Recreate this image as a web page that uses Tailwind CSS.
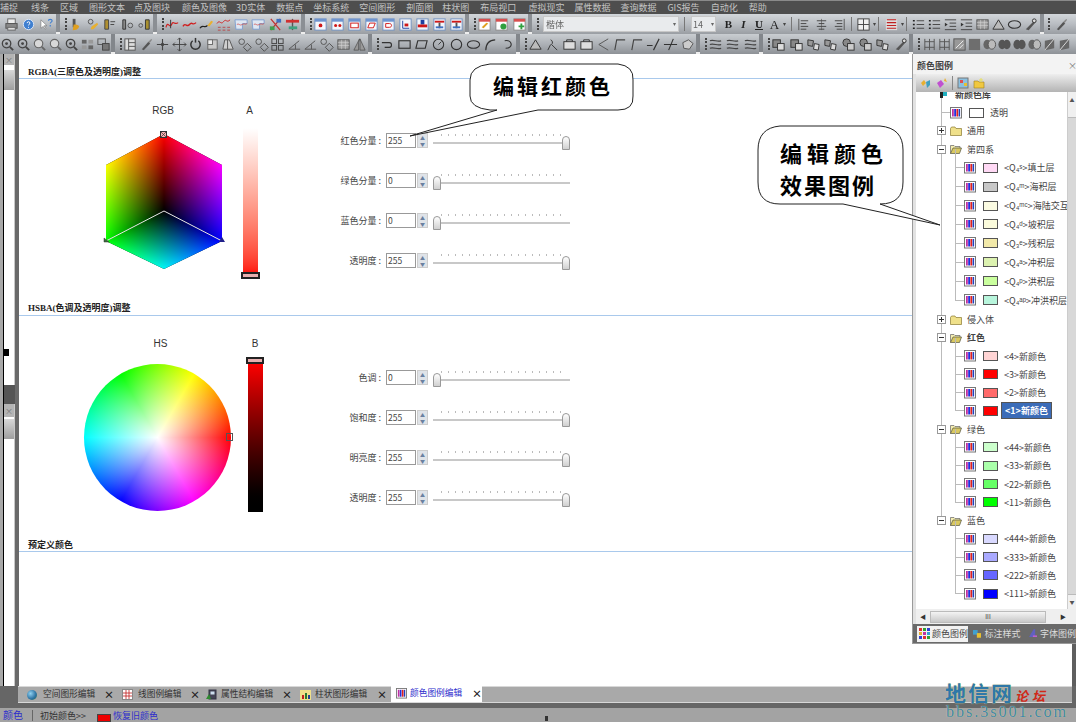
<!DOCTYPE html>
<html lang="zh">
<head>
<meta charset="utf-8">
<title>颜色图例编辑</title>
<script src="https://cdn.jsdelivr.net/npm/@tailwindcss/browser@4"></script>
</head>
<body class="bg-[#5a5a5a]">
<div class="relative w-[1076px] h-[722px] overflow-hidden flex flex-col font-['Noto_Sans_CJK_SC','Liberation_Sans',sans-serif] text-[9px] leading-none text-[#444]">

<svg class="absolute w-0 h-0">
  <defs>
    <symbol id="pr" viewBox="0 0 16 16"><rect x="4" y="2" width="8" height="5" fill="#eee" stroke="#666"/><rect x="2" y="7" width="12" height="5" fill="#888" stroke="#555"/><rect x="4" y="11" width="8" height="3" fill="#ddd" stroke="#666"/></symbol>
    <symbol id="hp" viewBox="0 0 16 16"><circle cx="8" cy="8" r="5.500" fill="#3f7fd0" stroke="#dfe8f5"/><path d="M6.500 6.500c0-2 3-2 3 0 0 1.200-1.500 1.200-1.500 2.500M8 10.500v1" stroke="#fff" fill="none"/></symbol>
    <symbol id="wh" viewBox="0 0 16 16"><path d="M2 3v9l2.500-2 2 3 1-.7-2-3h3z" fill="#fff" stroke="#777" stroke-width=".7"/><path d="M10 4c0-2 4-2 4 0 0 1.500-2 1.500-2 3M12 8.500v1.500" stroke="#3f7fd0" fill="none" stroke-width="1.200"/></symbol>
    <symbol id="ya" viewBox="0 0 16 16"><path d="M5 2h3v9H5z" fill="#555"/><path d="M6 8c2 0 5 0 6 2-1 3-4 4-7 4z" fill="#e0a020"/></symbol>
    <symbol id="yb" viewBox="0 0 16 16"><circle cx="6" cy="5" r="2.500" fill="none" stroke="#555"/><path d="M7 10l6-4 1 2-5 5-3 0z" fill="#e8b030"/></symbol>
    <symbol id="yc" viewBox="0 0 16 16"><path d="M3 3h4v10H3z" fill="#b09030" stroke="#444"/><path d="M9 5h5M9 8h4" stroke="#444"/></symbol>
    <symbol id="yd" viewBox="0 0 16 16"><path d="M3 3h3v10H3z" fill="#888" stroke="#333"/><circle cx="11" cy="9" r="2.500" fill="none" stroke="#555"/></symbol>
    <symbol id="ye" viewBox="0 0 16 16"><circle cx="4" cy="9" r="2" fill="none" stroke="#555"/><path d="M9 3h4v10H9z" fill="#a89030" stroke="#333"/></symbol>
    <symbol id="ca" viewBox="0 0 16 16"><path d="M1 11c2-8 4 2 6-3s3 1 7-2" fill="none" stroke="#d02020" stroke-width="1.300"/><path d="M6 3v9" stroke="#333"/></symbol>
    <symbol id="cb" viewBox="0 0 16 16"><path d="M1 10c3-5 4 2 7-2s3 2 7-2" fill="none" stroke="#d02020" stroke-width="1.500"/></symbol>
    <symbol id="cc" viewBox="0 0 16 16"><path d="M1 12c3-5 5 1 8-3" fill="none" stroke="#222" stroke-width="1.300"/><path d="M9 9l4-5 2 1-4 5z" fill="#e8b030"/></symbol>
    <symbol id="cd" viewBox="0 0 16 16"><path d="M1 7c3-5 4 2 7-2s3 2 7-2" fill="none" stroke="#d02020"/><path d="M2 11h3M2 14h3M7 11h3M7 14h3M12 11h3M12 14h3" stroke="#c03030" stroke-width=".8"/></symbol>
    <symbol id="ce" viewBox="0 0 16 16"><path d="M1 3h13v4H9v6H2z" fill="#dfe7f2" stroke="#7f9fd0"/><path d="M3 8c2-2 3 2 6 0s2 1 5-1" fill="none" stroke="#d05050" stroke-width=".8"/></symbol>
    <symbol id="cf" viewBox="0 0 16 16"><path d="M3 2l10 12M13 2L3 14" stroke="#c03030" stroke-width="1.300"/><rect x="2" y="10" width="5" height="4" fill="#3fa050"/><rect x="9" y="2" width="5" height="4" fill="#3f70c0"/></symbol>
    <symbol id="cg" viewBox="0 0 16 16"><path d="M8 2v12" stroke="#555" stroke-width="1.500"/><rect x="1" y="3" width="14" height="3" fill="#d03030"/><rect x="4" y="10" width="9" height="3" fill="#3fa080"/></symbol>
    <symbol id="wa" viewBox="0 0 16 16"><rect x="2" y="2" width="12" height="12" fill="#f4f6fb" stroke="#7090c0"/><rect x="2" y="2" width="12" height="3" fill="#6f95d0"/><circle cx="8" cy="9" r="2" fill="#d01818"/></symbol>
    <symbol id="wb" viewBox="0 0 16 16"><rect x="2" y="2" width="12" height="12" fill="#f4f6fb" stroke="#7090c0"/><rect x="2" y="2" width="12" height="3" fill="#6f95d0"/><circle cx="6" cy="9" r="1.600" fill="#d01818"/><circle cx="10.500" cy="9" r="1.600" fill="#d01818"/></symbol>
    <symbol id="wc" viewBox="0 0 16 16"><rect x="2" y="2" width="12" height="12" fill="#f4f6fb" stroke="#7090c0"/><rect x="2" y="2" width="12" height="3" fill="#6f95d0"/><rect x="4" y="6.500" width="8" height="5" fill="#fff" stroke="#d01818"/></symbol>
    <symbol id="wd" viewBox="0 0 16 16"><rect x="2" y="2" width="12" height="12" fill="#f4f6fb" stroke="#7090c0"/><rect x="2" y="2" width="12" height="3" fill="#6f95d0"/><path d="M6 6.500h6l-2 5H4z" fill="#fff" stroke="#d01818"/></symbol>
    <symbol id="we" viewBox="0 0 16 16"><rect x="2" y="2" width="12" height="12" fill="#f4f6fb" stroke="#7090c0"/><rect x="2" y="2" width="12" height="3" fill="#6f95d0"/><path d="M5 7h4c3 0 3 4 0 4H5z" fill="#fff" stroke="#d01818"/></symbol>
    <symbol id="wf" viewBox="0 0 16 16"><rect x="2" y="2" width="12" height="12" fill="#f4f6fb" stroke="#7090c0"/><path d="M5 4v8h7" stroke="#2040a0" fill="none"/><rect x="7" y="7" width="4" height="3" fill="#d01818"/></symbol>
    <symbol id="wg" viewBox="0 0 16 16"><rect x="2" y="2" width="12" height="12" fill="#f4f6fb" stroke="#7090c0"/><rect x="6" y="3" width="4" height="5" fill="#2040a0"/><rect x="3" y="8" width="10" height="3" fill="#d01818"/></symbol>
    <symbol id="wh2" viewBox="0 0 16 16"><rect x="2" y="2" width="12" height="12" fill="#f4f6fb" stroke="#7090c0"/><rect x="3" y="4" width="10" height="2" fill="#d01818"/><rect x="7" y="6" width="2" height="6" fill="#555"/><rect x="4" y="10" width="8" height="2" fill="#3f70c0"/></symbol>
    <symbol id="ta" viewBox="0 0 16 16"><rect x="2" y="2" width="12" height="12" fill="#fff" stroke="#8a8a8a"/><rect x="2" y="2" width="12" height="3" fill="#d85050"/><path d="M5 11l5-5 2 1-5 5z" fill="#e0a020"/></symbol>
    <symbol id="tb" viewBox="0 0 16 16"><rect x="2" y="2" width="12" height="12" fill="#fff" stroke="#8a8a8a"/><rect x="2" y="2" width="12" height="3" fill="#d85050"/><circle cx="10" cy="10" r="3.200" fill="#30a040"/></symbol>
    <symbol id="tc" viewBox="0 0 16 16"><rect x="2" y="2" width="12" height="12" fill="#fff" stroke="#8a8a8a"/><rect x="2" y="2" width="12" height="3" fill="#d85050"/><path d="M10 7v6M7 10h6" stroke="#30a040" stroke-width="2"/></symbol>
    <symbol id="za" viewBox="0 0 16 16"><circle cx="7" cy="7" r="4.500" fill="none" stroke="#444" stroke-width="1.400"/><path d="M10.500 10.500L14 14" stroke="#444" stroke-width="2"/><circle cx="7" cy="7" r="1.500" fill="#444"/></symbol>
    <symbol id="zb" viewBox="0 0 16 16"><circle cx="7" cy="7" r="4.500" fill="#d8d8d8" stroke="#666" stroke-width="1.200"/><path d="M10.500 10.500L14 14" stroke="#666" stroke-width="2"/></symbol>
    <symbol id="zc" viewBox="0 0 16 16"><rect x="2" y="3" width="5" height="4" fill="#666"/><rect x="9" y="3" width="5" height="4" fill="#999"/><rect x="2" y="9" width="5" height="4" fill="#999"/><rect x="9" y="9" width="5" height="4" fill="#666"/></symbol>
    <symbol id="zd" viewBox="0 0 16 16"><rect x="2" y="2" width="8" height="6" fill="none" stroke="#555"/><rect x="7" y="7" width="7" height="7" fill="#777" stroke="#444"/></symbol>
    <symbol id="ma" viewBox="0 0 16 16"><path d="M8 2v12M2 8h12" stroke="#444" stroke-width="1.200"/><circle cx="8" cy="8" r="1.800" fill="#444"/></symbol>
    <symbol id="mb" viewBox="0 0 16 16"><path d="M8 1v14M1 8h14M8 1l-2 2M8 1l2 2M8 15l-2-2M8 15l2-2M1 8l2-2M1 8l2 2M15 8l-2-2M15 8l-2 2" stroke="#444" fill="none"/></symbol>
    <symbol id="mc" viewBox="0 0 16 16"><path d="M5 4a5 5 0 1 0 6 0" fill="none" stroke="#333" stroke-width="1.600"/><path d="M8 1v5" stroke="#333" stroke-width="1.600"/></symbol>
    <symbol id="md" viewBox="0 0 16 16"><rect x="3" y="3" width="10" height="10" fill="#c8c8c8" stroke="#666"/><rect x="3" y="3" width="5" height="5" fill="#eee" stroke="#666"/></symbol>
    <symbol id="me" viewBox="0 0 16 16"><path d="M4 3h5l4 10H2z" fill="#cfcfcf" stroke="#555"/><path d="M7 3v10" stroke="#555"/></symbol>
    <symbol id="mf" viewBox="0 0 16 16"><circle cx="5" cy="5" r="3" fill="none" stroke="#555"/><rect x="8" y="8" width="6" height="6" fill="none" stroke="#555" transform="rotate(45 11 11)"/></symbol>
    <symbol id="mg" viewBox="0 0 16 16"><rect x="2" y="2" width="5" height="5" fill="none" stroke="#444"/><rect x="9" y="2" width="5" height="5" fill="none" stroke="#444"/><rect x="2" y="9" width="5" height="5" fill="none" stroke="#444"/><rect x="9" y="9" width="5" height="5" fill="none" stroke="#444"/></symbol>
    <symbol id="mh" viewBox="0 0 16 16"><path d="M2 13L13 4M2 13h12M9 13V8" stroke="#555" fill="none"/></symbol>
    <symbol id="mi" viewBox="0 0 16 16"><rect x="2" y="3" width="12" height="10" fill="#a0a0a0" stroke="#555"/><path d="M2 6h12M2 9h12M6 3v10M10 3v10" stroke="#d8d8d8" stroke-width=".6"/></symbol>
    <symbol id="mj" viewBox="0 0 16 16"><path d="M8 2L2 14h5V6zM8.500 2v12H14z" fill="#999" stroke="#444" stroke-width=".7"/></symbol>
    <symbol id="mk" viewBox="0 0 16 16"><rect x="2" y="2" width="11" height="12" fill="#ddd" stroke="#555"/><path d="M6 2v12M6 6h7M6 10h7" stroke="#555"/></symbol>
    <symbol id="ml" viewBox="0 0 16 16"><path d="M3 13l7-8 2 2-7 7z" fill="#555"/><path d="M10 5l3-3 1 1-3 4" fill="#888"/></symbol>
    <symbol id="sa" viewBox="0 0 16 16"><path d="M2 6h8c3 0 3 5 0 5H5" fill="none" stroke="#333" stroke-width="1.200"/></symbol>
    <symbol id="sb" viewBox="0 0 16 16"><rect x="2" y="4" width="12" height="8" fill="none" stroke="#333" stroke-width="1.200"/></symbol>
    <symbol id="sc" viewBox="0 0 16 16"><path d="M4 4h10l-2 8H2z" fill="none" stroke="#333" stroke-width="1.200"/></symbol>
    <symbol id="sd" viewBox="0 0 16 16"><circle cx="8" cy="8" r="5.500" fill="none" stroke="#333" stroke-width="1.100"/><path d="M8 8l3-3" stroke="#333"/></symbol>
    <symbol id="se" viewBox="0 0 16 16"><circle cx="8" cy="8" r="5.500" fill="none" stroke="#333" stroke-width="1.200"/></symbol>
    <symbol id="sf" viewBox="0 0 16 16"><ellipse cx="8" cy="8" rx="6.500" ry="4" fill="none" stroke="#333" stroke-width="1.200"/></symbol>
    <symbol id="sg" viewBox="0 0 16 16"><path d="M3 14C3 7 7 3 13 3" fill="none" stroke="#333" stroke-width="1.200"/></symbol>
    <symbol id="sh" viewBox="0 0 16 16"><path d="M5 4c8-2 10 8 1 8" fill="none" stroke="#333" stroke-width="1.200"/></symbol>
    <symbol id="si" viewBox="0 0 16 16"><path d="M8 3l6 10H2z" fill="#bbb" stroke="#333"/></symbol>
    <symbol id="sj" viewBox="0 0 16 16"><path d="M6 3a3 3 0 0 1 1 5l6 6M6 8l-3 6" fill="none" stroke="#333"/></symbol>
    <symbol id="sk" viewBox="0 0 16 16"><rect x="2" y="5" width="12" height="8" fill="#ddd" stroke="#333"/><path d="M5 5V3h6v2" fill="none" stroke="#333"/></symbol>
    <symbol id="sl" viewBox="0 0 16 16"><path d="M13 2L3 8l10 6" fill="none" stroke="#555"/></symbol>
    <symbol id="sm" viewBox="0 0 16 16"><path d="M14 3H5L3 14" fill="none" stroke="#444" stroke-width="1.200"/></symbol>
    <symbol id="sn" viewBox="0 0 16 16"><path d="M1 9h6M14 2L8 14" fill="none" stroke="#333" stroke-width="1.200"/></symbol>
    <symbol id="so" viewBox="0 0 16 16"><path d="M1 8h14M11 2L6 14" fill="none" stroke="#333" stroke-width="1.200"/></symbol>
    <symbol id="sp" viewBox="0 0 16 16"><path d="M3 6l6-3 5 4-4 6-6-1z" fill="#ccc" stroke="#555"/></symbol>
    <symbol id="ha" viewBox="0 0 16 16"><path d="M2 4c4-2 8 2 12 0M2 8c4-2 8 2 12 0M2 12c4-2 8 2 12 0" fill="none" stroke="#444" stroke-width="1.300"/></symbol>
    <symbol id="al" viewBox="0 0 16 16"><path d="M3 2v12" stroke="#555"/><path d="M5 4h8M5 7h6M5 10h8M5 13h6" stroke="#444"/></symbol>
    <symbol id="ac" viewBox="0 0 16 16"><path d="M8 2v12" stroke="#777"/><path d="M3 4h10M5 7h6M3 10h10M5 13h6" stroke="#444"/></symbol>
    <symbol id="ar" viewBox="0 0 16 16"><path d="M13 2v12" stroke="#555"/><path d="M3 4h8M5 7h6M3 10h8M5 13h6" stroke="#444"/></symbol>
    <symbol id="li" viewBox="0 0 16 16"><path d="M2 4h2M2 8h2M2 12h2" stroke="#222" stroke-width="1.500"/><path d="M6 4h8M6 8h8M6 12h8" stroke="#444"/></symbol>
    <symbol id="ind" viewBox="0 0 16 16"><path d="M2 3h12M7 6.500h7M7 10h7M2 13.500h12" stroke="#444"/><path d="M2 6l3 2-3 2z" fill="#333"/></symbol>
    <symbol id="tbl" viewBox="0 0 16 16"><rect x="2" y="2" width="12" height="12" fill="#f0f0f0" stroke="#444"/><path d="M2 8h12M8 2v12" stroke="#444"/></symbol>
    <symbol id="lr" viewBox="0 0 16 16"><rect x="2" y="2" width="12" height="12" fill="#ddd"/><path d="M3 3h10M3 6h10M3 9h10M3 12h10" stroke="#c02020" stroke-width="1.100"/></symbol>
    <symbol id="ia" viewBox="0 0 16 16"><rect x="2" y="3" width="8" height="8" fill="#888" stroke="#333"/><rect x="7" y="7" width="7" height="7" fill="#ddd" stroke="#333"/></symbol>
    <symbol id="ib" viewBox="0 0 16 16"><circle cx="6" cy="6" r="4" fill="#888" stroke="#333"/><rect x="7" y="7" width="7" height="7" fill="#ccc" stroke="#333"/></symbol>
    <symbol id="ic" viewBox="0 0 16 16"><path d="M2 3l6 1-1 6-5-1z" fill="#999" stroke="#333"/><path d="M9 7l5 1-1 6-5-1z" fill="#ddd" stroke="#333"/></symbol>
    <symbol id="id" viewBox="0 0 16 16"><path d="M3 13L13 3l1 2L6 14z" fill="#555"/><circle cx="12" cy="4" r="2" fill="#ddd" stroke="#333"/></symbol>
    <symbol id="ja" viewBox="0 0 16 16"><path d="M3 2v12M13 2v12M3 5h10M3 11h10M8 2v12" stroke="#555" fill="none"/></symbol>
    <symbol id="jb" viewBox="0 0 16 16"><rect x="2" y="2" width="12" height="12" fill="#999" stroke="#555"/><path d="M4 12L12 4M8 12l4-4" stroke="#eee"/></symbol>
    <symbol id="jc" viewBox="0 0 16 16"><rect x="2" y="2" width="12" height="12" fill="#6e6e6e"/></symbol>
    <symbol id="jd" viewBox="0 0 16 16"><ellipse cx="5.500" cy="8" rx="4" ry="5" fill="#666"/><ellipse cx="10.500" cy="8" rx="4" ry="5" fill="#bbb" stroke="#555"/></symbol>
    <symbol id="je" viewBox="0 0 16 16"><ellipse cx="5.500" cy="8" rx="4" ry="5" fill="#555"/><ellipse cx="10.500" cy="8" rx="4" ry="5" fill="#555"/></symbol>
    <symbol id="jf" viewBox="0 0 16 16"><path d="M3 14V4l10-2v10z" fill="#666"/><path d="M3 14l10-12" stroke="#ddd"/></symbol>
    <symbol id="bar" viewBox="0 0 12 12"><rect x=".5" y=".5" width="11" height="10.500" fill="#fff" stroke="#777"/><rect x="2" y="2" width="1.800" height="7.500" fill="#c030a0"/><rect x="4.200" y="2" width="1.800" height="7.500" fill="#2030e0"/><rect x="6.400" y="2" width="1.800" height="7.500" fill="#e02020"/><rect x="8.600" y="2" width="1.500" height="7.500" fill="#2040c0"/></symbol>
    <symbol id="fc" viewBox="0 0 12 10"><path d="M.5 2.500V9.500h11v-7H6L5 1H1.500z" fill="#efe08a" stroke="#8a7a30" stroke-width=".7"/></symbol>
    <symbol id="fo" viewBox="0 0 12 10"><path d="M.5 9.500V1.500H4L5 2.500h5V4" fill="#f5eeb0" stroke="#666" stroke-width=".7"/><path d="M.5 9.500L3 4h8.500l-2 5.500z" fill="#d9c860" stroke="#554" stroke-width=".7"/></symbol>
    <symbol id="plus" viewBox="0 0 9 9"><rect x=".5" y=".5" width="8" height="8" fill="#fff" stroke="#999"/><path d="M2 4.500h5M4.500 2v5" stroke="#333"/></symbol>
    <symbol id="minus" viewBox="0 0 9 9"><rect x=".5" y=".5" width="8" height="8" fill="#fff" stroke="#999"/><path d="M2 4.500h5" stroke="#333"/></symbol>
  </defs>
</svg>

<!-- Menu bar -->
<nav class="h-[14px] shrink-0 bg-[#4e4e4e] text-[#c4c4c4] flex items-center pb-[1px] whitespace-nowrap overflow-hidden border-t border-[#8a8a8a]">
  <span class="mr-[13px]">捕捉</span>
  <span class="mr-[11px]">线条</span>
  <span class="mr-[11px]">区域</span>
  <span class="mr-[9px]">图形文本</span>
  <span class="mr-[12px]">点及图块</span>
  <span class="mr-[9px]">颜色及图像</span>
  <span class="mr-[11px]">3D实体</span>
  <span class="mr-[10px]">数据点</span>
  <span class="mr-[10px]">坐标系统</span>
  <span class="mr-[11px]">空间图形</span>
  <span class="mr-[9px]">剖面图</span>
  <span class="mr-[11px]">柱状图</span>
  <span class="mr-[12px]">布局视口</span>
  <span class="mr-[10px]">虚拟现实</span>
  <span class="mr-[10px]">属性数据</span>
  <span class="mr-[11px]">查询数据</span>
  <span class="mr-[11px]">GIS报告</span>
  <span class="mr-[11px]">自动化</span>
  <span>帮助</span>
</nav>

<!-- Toolbar row 1 -->
<div class="h-[20px] shrink-0 bg-gradient-to-b from-[#d2d6da] via-[#b9bdc2] to-[#9a9ea3] flex items-center whitespace-nowrap overflow-hidden blur-[.3px] [&_svg]:w-[15px] [&_svg]:h-[15px] [&_svg]:shrink-0">
  <div class="flex items-center justify-around w-[52px] ml-[3px]"><svg><use href="#pr"/></svg><svg><use href="#hp"/></svg><svg><use href="#wh"/></svg></div>
  <i class="w-[4px] h-[20px] bg-[#8b8f94] ml-[1px] mr-[5px] border-b-2 border-[#eee]"></i>
  <i class="h-[12px] border-l-2 border-dotted border-[#444]"></i>
  <div class="flex items-center justify-around w-[86px]"><svg><use href="#ya"/></svg><svg><use href="#yb"/></svg><svg><use href="#yc"/></svg><svg><use href="#yd"/></svg><svg><use href="#ye"/></svg></div>
  <i class="w-[4px] h-[20px] bg-[#8b8f94] mr-[5px] border-b-2 border-[#eee]"></i>
  <i class="h-[12px] border-l-2 border-dotted border-[#444]"></i>
  <div class="flex items-center justify-around w-[137px]"><svg><use href="#ca"/></svg><svg><use href="#cb"/></svg><svg><use href="#cc"/></svg><svg><use href="#cd"/></svg><svg><use href="#ce"/></svg><svg><use href="#ce"/></svg><svg><use href="#cf"/></svg><svg><use href="#cg"/></svg></div>
  <i class="w-[4px] h-[20px] bg-[#8b8f94] mr-[5px] border-b-2 border-[#eee]"></i>
  <i class="h-[12px] border-l-2 border-dotted border-[#444]"></i>
  <div class="flex items-center justify-around w-[153px]"><svg><use href="#wa"/></svg><svg><use href="#wb"/></svg><svg><use href="#wc"/></svg><svg><use href="#wd"/></svg><svg><use href="#we"/></svg><svg><use href="#wf"/></svg><svg><use href="#wg"/></svg><svg><use href="#wh2"/></svg><svg><use href="#wh2"/></svg></div>
  <i class="w-[4px] h-[20px] bg-[#8b8f94] mr-[5px] border-b-2 border-[#eee]"></i>
  <i class="h-[12px] border-l-2 border-dotted border-[#444]"></i>
  <div class="flex items-center justify-around w-[52px]"><svg><use href="#ta"/></svg><svg><use href="#tb"/></svg><svg><use href="#tc"/></svg></div>
  <i class="w-[4px] h-[20px] bg-[#8b8f94] mr-[5px] border-b-2 border-[#eee]"></i>
  <i class="h-[12px] border-l-2 border-dotted border-[#444] mr-[4px]"></i>
  <div class="w-[136px] h-[16px] bg-[#e9ebed] border border-[#c8c8c8] flex items-center justify-between px-[2px] text-[#666]"><span>楷体</span><span class="text-[6px]">▾</span></div>
  <i class="h-[14px] border-l border-[#777] ml-[5px] mr-[6px]"></i>
  <div class="w-[25px] h-[16px] bg-[#e9ebed] border border-[#c8c8c8] flex items-center justify-between px-[1px] text-[#666]"><span>14</span><span class="text-[6px]">▾</span></div>
  <div class="flex items-center ml-[5px] font-['Liberation_Serif',serif] font-bold text-[11px] text-[#222]">
    <span class="w-[15px] text-center">B</span><span class="w-[15px] text-center italic">I</span><span class="w-[16px] text-center underline">U</span><span class="w-[15px] text-center font-normal text-[13px]">A</span>
  </div>
  <span class="text-[6px] ml-[1px] mr-[5px]">▾</span><i class="h-[14px] border-l border-[#777] mr-[4px]"></i>
  <div class="flex items-center gap-[3px]"><svg><use href="#al"/></svg><svg><use href="#ac"/></svg><svg><use href="#ar"/></svg></div>
  <i class="h-[14px] border-l border-[#777] mx-[4px]"></i>
  <svg><use href="#tbl"/></svg><span class="text-[6px] mx-[2px]">▾</span>
  <i class="h-[14px] border-l border-[#777] mr-[5px]"></i>
  <svg><use href="#lr"/></svg><span class="text-[6px] mx-[2px]">▾</span>
  <i class="h-[14px] border-l border-[#777] mr-[4px]"></i>
  <div class="flex items-center gap-[1px]"><svg><use href="#li"/></svg><svg><use href="#li"/></svg><svg><use href="#ind"/></svg><svg><use href="#ind"/></svg><svg><use href="#mi"/></svg><svg><use href="#si"/></svg><svg><use href="#sf"/></svg><svg><use href="#id"/></svg></div>
  <i class="w-[4px] h-[20px] bg-[#8b8f94] ml-[2px] mr-[4px] border-b-2 border-[#eee]"></i>
  <i class="h-[12px] border-l-2 border-dotted border-[#444] mr-[4px]"></i>
  <svg><use href="#ml"/></svg>
</div>

<!-- Toolbar row 2 -->
<div class="h-[20px] shrink-0 bg-gradient-to-b from-[#c9cdd1] via-[#adb1b6] to-[#8e9297] flex items-center whitespace-nowrap overflow-hidden blur-[.3px] [&_svg]:w-[15px] [&_svg]:h-[15px] [&_svg]:shrink-0">
  <div class="flex items-center justify-around w-[112px] -ml-[1px]"><svg><use href="#za"/></svg><svg><use href="#za"/></svg><svg><use href="#zb"/></svg><svg><use href="#zb"/></svg><svg><use href="#za"/></svg><svg><use href="#zc"/></svg><svg><use href="#zd"/></svg></div>
  <i class="w-[4px] h-[20px] bg-[#82868b] mr-[5px] border-b-2 border-[#eee]"></i>
  <i class="h-[12px] border-l-2 border-dotted border-[#444]"></i>
  <div class="flex items-center justify-around w-[246px]"><svg><use href="#mk"/></svg><svg><use href="#ml"/></svg><svg><use href="#ma"/></svg><svg><use href="#mb"/></svg><svg><use href="#mc"/></svg><svg><use href="#md"/></svg><svg><use href="#me"/></svg><svg><use href="#mf"/></svg><svg><use href="#mf"/></svg><svg><use href="#mg"/></svg><svg><use href="#mh"/></svg><svg><use href="#mh"/></svg><svg><use href="#mf"/></svg><svg><use href="#mi"/></svg><svg><use href="#mj"/></svg></div>
  <i class="w-[4px] h-[20px] bg-[#82868b] mr-[5px] border-b-2 border-[#eee]"></i>
  <i class="h-[12px] border-l-2 border-dotted border-[#444]"></i>
  <div class="flex items-center justify-around w-[137px]"><svg><use href="#sa"/></svg><svg><use href="#sb"/></svg><svg><use href="#sc"/></svg><svg><use href="#sd"/></svg><svg><use href="#se"/></svg><svg><use href="#sf"/></svg><svg><use href="#sg"/></svg><svg><use href="#sh"/></svg></div>
  <i class="w-[4px] h-[20px] bg-[#82868b] mr-[5px] border-b-2 border-[#eee]"></i>
  <i class="h-[12px] border-l-2 border-dotted border-[#444]"></i>
  <div class="flex items-center justify-around w-[169px]"><svg><use href="#si"/></svg><svg><use href="#sj"/></svg><svg><use href="#sk"/></svg><svg><use href="#sk"/></svg><svg><use href="#sl"/></svg><svg><use href="#sm"/></svg><svg><use href="#sm"/></svg><svg><use href="#sn"/></svg><svg><use href="#so"/></svg><svg><use href="#sp"/></svg></div>
  <i class="w-[4px] h-[20px] bg-[#82868b] mr-[5px] border-b-2 border-[#eee]"></i>
  <i class="h-[12px] border-l-2 border-dotted border-[#444]"></i>
  <div class="flex items-center justify-around w-[52px]"><svg><use href="#ha"/></svg><svg><use href="#ha"/></svg><svg><use href="#ha"/></svg></div>
  <i class="w-[4px] h-[20px] bg-[#82868b] mr-[5px] border-b-2 border-[#eee]"></i>
  <i class="h-[12px] border-l-2 border-dotted border-[#444]"></i>
  <div class="flex items-center justify-around w-[139px]"><svg><use href="#ia"/></svg><svg><use href="#ia"/></svg><svg><use href="#ic"/></svg><svg><use href="#ic"/></svg><svg><use href="#ib"/></svg><svg><use href="#ib"/></svg><svg><use href="#ic"/></svg><svg><use href="#id"/></svg></div>
  <i class="w-[4px] h-[20px] bg-[#82868b] mr-[5px] border-b-2 border-[#eee]"></i>
  <i class="h-[12px] border-l-2 border-dotted border-[#444] mr-[2px]"></i>
  <div class="flex items-center gap-[0px]"><svg><use href="#ja"/></svg><svg><use href="#ja"/></svg><svg><use href="#jb"/></svg><svg><use href="#jc"/></svg><svg><use href="#jd"/></svg><svg><use href="#je"/></svg><svg><use href="#je"/></svg><svg><use href="#jd"/></svg><svg><use href="#jf"/></svg><svg><use href="#jf"/></svg></div>
</div>

<!-- Workspace -->
<div class="flex-1 flex min-h-0">
  <!-- Left docked strip -->
  <aside class="w-[19px] shrink-0 flex bg-[#6a6a6a]">
    <i class="w-[3px] bg-[#a8a8a8]"></i>
    <i class="w-[1px] bg-black"></i>
    <div class="w-[11px] flex flex-col">
      <div class="h-[331px] bg-white flex flex-col border-r border-[#c8c8c8]">
        <div class="h-[11px] bg-[#b4b4b4] text-[#777] text-[8px] flex items-center justify-center">×</div>
        <div class="h-[20px] mt-[5px] bg-gradient-to-b from-[#d8d8d8] to-[#9e9e9e]"></div>
        <i class="w-[5px] h-[7px] bg-black mt-[259px]"></i>
      </div>
      <div class="h-[19px] bg-[#555]"></div>
      <div class="flex-1 bg-white flex flex-col border-r border-[#c8c8c8]">
        <div class="h-[13px] bg-[#b4b4b4] text-[#777] text-[8px] flex items-center justify-center">×</div>
        <div class="h-[20px] mt-[2px] bg-gradient-to-b from-[#d8d8d8] to-[#9e9e9e]"></div>
      </div>
    </div>
  </aside>

  <!-- White document area -->
  <main class="w-[1053px] bg-white">
    <div class="h-[25px] flex items-end pl-[9px] pb-[1px] border-b border-[#a9c9ec] font-['Liberation_Serif','Noto_Sans_CJK_SC',serif] font-bold text-[9px] text-[#222]">RGBA(三原色及透明度)调整</div>
    <section class="h-[222px] flex">
      <div class="w-[128px] ml-[81px] flex flex-col items-center">
        <div class="mt-[27px] h-[11px] -ml-[2px] font-['Liberation_Sans',sans-serif] text-[10px] text-[#333]">RGB</div>
        <svg class="mt-[11px] w-[128px] h-[147px] isolate" viewBox="100 128 128 147">
          <defs>
            <linearGradient id="lr1" gradientUnits="userSpaceOnUse" x1="164" y1="211" x2="132.600" y2="150.200"><stop offset="0" stop-color="#000"/><stop offset="1" stop-color="#f00"/></linearGradient>
            <linearGradient id="lg1" gradientUnits="userSpaceOnUse" x1="164" y1="0" x2="106" y2="0"><stop offset="0" stop-color="#000"/><stop offset="1" stop-color="#0f0"/></linearGradient>
            <linearGradient id="rr1" gradientUnits="userSpaceOnUse" x1="164" y1="211" x2="195.400" y2="150.200"><stop offset="0" stop-color="#000"/><stop offset="1" stop-color="#f00"/></linearGradient>
            <linearGradient id="rb1" gradientUnits="userSpaceOnUse" x1="164" y1="0" x2="222" y2="0"><stop offset="0" stop-color="#000"/><stop offset="1" stop-color="#00f"/></linearGradient>
            <linearGradient id="bg1" gradientUnits="userSpaceOnUse" x1="164" y1="211" x2="139.500" y2="258.300"><stop offset="0" stop-color="#000"/><stop offset="1" stop-color="#0f0"/></linearGradient>
            <linearGradient id="bb1" gradientUnits="userSpaceOnUse" x1="164" y1="211" x2="188.500" y2="258.300"><stop offset="0" stop-color="#000"/><stop offset="1" stop-color="#00f"/></linearGradient>
          </defs>
          <polygon points="164,211 164,134 106,165 106,241" fill="url(#lr1)"/>
          <polygon class="mix-blend-screen" points="164,211 164,134 106,165 106,241" fill="url(#lg1)"/>
          <polygon points="164,211 164,134 222,165 222,241" fill="url(#rr1)"/>
          <polygon class="mix-blend-screen" points="164,211 164,134 222,165 222,241" fill="url(#rb1)"/>
          <polygon points="164,211 106,241 164,269 222,241" fill="url(#bg1)"/>
          <polygon class="mix-blend-screen" points="164,211 106,241 164,269 222,241" fill="url(#bb1)"/>
          <path d="M106 241L164 211L222 241" fill="none" stroke="#e8e8e8"/>
          <rect x="160.500" y="131.500" width="6" height="6" fill="#f6b0b0" stroke="#333"/>
          <path d="M160.500 131.500l6 6M166.500 131.500l-6 6" stroke="#333" stroke-width=".7"/>
          <path d="M104 238l5 4h-5z" fill="#3c6f3c" stroke="#333" stroke-width=".5"/>
          <path d="M222 237l3 5h-6z" fill="#20208a"/>
        </svg>
      </div>
      <div class="ml-[13px] w-[18px] flex flex-col items-center">
        <div class="mt-[27px] h-[11px] -ml-[1px] font-['Liberation_Sans',sans-serif] font-medium text-[10px] text-[#333]">A</div>
        <div class="relative mt-[11px] w-[15px] h-[147px] bg-gradient-to-b from-white to-[#ff0000]">
          <i class="absolute -left-[2px] bottom-[-4px] w-[19px] h-[7px] border-2 border-[#222] bg-[#e8b0b0]"></i>
        </div>
      </div>
      <div class="ml-[71px] pt-[54px] flex flex-col">
        <div class="h-[40px] flex items-start">
          <span class="w-[52px] pt-[3px] text-right pr-[1px]">红色分量 :</span>
          <div class="w-[30px] h-[15px] ml-[4px] border border-[#999] bg-white text-[8.500px] flex items-center pl-[1px]">255</div>
          <div class="w-[11px] h-[15px] ml-[1px] bg-[#dfe3e8] border border-[#ccc] text-[#6a80a0] text-[5px] flex flex-col items-center justify-center gap-[1px]"><span>▲</span><span>▼</span></div>
          <div class="relative w-[137px] h-[18px] ml-[5px]">
            <i class="absolute left-[8px] right-[3px] top-[1px] h-[2px] bg-[repeating-linear-gradient(90deg,#bbb_0,#bbb_1px,transparent_1px,transparent_7px)]"></i>
            <i class="absolute left-0 right-0 top-[9px] h-[2px] bg-[#c8c8c8]"></i>
            <i class="absolute right-0 top-[3px] w-[8px] h-[14px] rounded-t-[4px] bg-gradient-to-b from-white to-[#d0d0d0] border border-[#999]"></i>
          </div>
        </div>
        <div class="h-[40px] flex items-start">
          <span class="w-[52px] pt-[3px] text-right pr-[1px]">绿色分量 :</span>
          <div class="w-[30px] h-[15px] ml-[4px] border border-[#999] bg-white text-[8.500px] flex items-center pl-[1px]">0</div>
          <div class="w-[11px] h-[15px] ml-[1px] bg-[#dfe3e8] border border-[#ccc] text-[#6a80a0] text-[5px] flex flex-col items-center justify-center gap-[1px]"><span>▲</span><span>▼</span></div>
          <div class="relative w-[137px] h-[18px] ml-[5px]">
            <i class="absolute left-[8px] right-[3px] top-[1px] h-[2px] bg-[repeating-linear-gradient(90deg,#bbb_0,#bbb_1px,transparent_1px,transparent_7px)]"></i>
            <i class="absolute left-0 right-0 top-[9px] h-[2px] bg-[#c8c8c8]"></i>
            <i class="absolute left-0 top-[3px] w-[8px] h-[14px] rounded-t-[4px] bg-gradient-to-b from-white to-[#d0d0d0] border border-[#999]"></i>
          </div>
        </div>
        <div class="h-[40px] flex items-start">
          <span class="w-[52px] pt-[3px] text-right pr-[1px]">蓝色分量 :</span>
          <div class="w-[30px] h-[15px] ml-[4px] border border-[#999] bg-white text-[8.500px] flex items-center pl-[1px]">0</div>
          <div class="w-[11px] h-[15px] ml-[1px] bg-[#dfe3e8] border border-[#ccc] text-[#6a80a0] text-[5px] flex flex-col items-center justify-center gap-[1px]"><span>▲</span><span>▼</span></div>
          <div class="relative w-[137px] h-[18px] ml-[5px]">
            <i class="absolute left-[8px] right-[3px] top-[1px] h-[2px] bg-[repeating-linear-gradient(90deg,#bbb_0,#bbb_1px,transparent_1px,transparent_7px)]"></i>
            <i class="absolute left-0 right-0 top-[9px] h-[2px] bg-[#c8c8c8]"></i>
            <i class="absolute left-0 top-[3px] w-[8px] h-[14px] rounded-t-[4px] bg-gradient-to-b from-white to-[#d0d0d0] border border-[#999]"></i>
          </div>
        </div>
        <div class="h-[40px] flex items-start">
          <span class="w-[52px] pt-[3px] text-right pr-[1px]">透明度 :</span>
          <div class="w-[30px] h-[15px] ml-[4px] border border-[#999] bg-white text-[8.500px] flex items-center pl-[1px]">255</div>
          <div class="w-[11px] h-[15px] ml-[1px] bg-[#dfe3e8] border border-[#ccc] text-[#6a80a0] text-[5px] flex flex-col items-center justify-center gap-[1px]"><span>▲</span><span>▼</span></div>
          <div class="relative w-[137px] h-[18px] ml-[5px]">
            <i class="absolute left-[8px] right-[3px] top-[1px] h-[2px] bg-[repeating-linear-gradient(90deg,#bbb_0,#bbb_1px,transparent_1px,transparent_7px)]"></i>
            <i class="absolute left-0 right-0 top-[9px] h-[2px] bg-[#c8c8c8]"></i>
            <i class="absolute right-0 top-[3px] w-[8px] h-[14px] rounded-t-[4px] bg-gradient-to-b from-white to-[#d0d0d0] border border-[#999]"></i>
          </div>
        </div>
      </div>
    </section>

    <div class="h-[15px] flex items-end pl-[9px] pb-[2px] border-b border-[#a9c9ec] font-['Liberation_Serif','Noto_Sans_CJK_SC',serif] font-bold text-[9px] text-[#222]">HSBA(色调及透明度)调整</div>
    <section class="h-[221px] flex">
      <div class="w-[147px] ml-[65px] flex flex-col items-center">
        <div class="mt-[23px] h-[11px] ml-[6px] font-['Liberation_Sans',sans-serif] font-medium text-[10px] text-[#333]">HS</div>
        <div class="relative mt-[14px] w-[147px] h-[147px] rounded-full bg-[conic-gradient(from_90deg,#f00,#f0f,#00f,#0ff,#0f0,#ff0,#f00)]">
          <i class="absolute inset-0 rounded-full bg-[radial-gradient(closest-side,#fff,#fff0)]"></i>
          <i class="absolute right-[-2px] top-[69px] w-[7px] h-[8px] border border-[#555]"></i>
        </div>
      </div>
      <div class="ml-[15px] w-[18px] flex flex-col items-center">
        <div class="mt-[23px] h-[11px] font-['Liberation_Sans',sans-serif] font-medium text-[10px] text-[#333]">B</div>
        <div class="relative mt-[12px] w-[15px] h-[150px] bg-gradient-to-b from-[#ff0000] to-black">
          <i class="absolute -left-[1.500px] -top-[5px] w-[18px] h-[7px] border-2 border-[#222] bg-[#e8b0b0]"></i>
        </div>
      </div>
      <div class="ml-[66px] pt-[54px] flex flex-col">
        <div class="h-[40px] flex items-start">
          <span class="w-[52px] pt-[3px] text-right pr-[1px]">色调 :</span>
          <div class="w-[30px] h-[15px] ml-[4px] border border-[#999] bg-white text-[8.500px] flex items-center pl-[1px]">0</div>
          <div class="w-[11px] h-[15px] ml-[1px] bg-[#dfe3e8] border border-[#ccc] text-[#6a80a0] text-[5px] flex flex-col items-center justify-center gap-[1px]"><span>▲</span><span>▼</span></div>
          <div class="relative w-[137px] h-[18px] ml-[5px]">
            <i class="absolute left-[8px] right-[3px] top-[1px] h-[2px] bg-[repeating-linear-gradient(90deg,#bbb_0,#bbb_1px,transparent_1px,transparent_7px)]"></i>
            <i class="absolute left-0 right-0 top-[9px] h-[2px] bg-[#c8c8c8]"></i>
            <i class="absolute left-0 top-[3px] w-[8px] h-[14px] rounded-t-[4px] bg-gradient-to-b from-white to-[#d0d0d0] border border-[#999]"></i>
          </div>
        </div>
        <div class="h-[40px] flex items-start">
          <span class="w-[52px] pt-[3px] text-right pr-[1px]">饱和度 :</span>
          <div class="w-[30px] h-[15px] ml-[4px] border border-[#999] bg-white text-[8.500px] flex items-center pl-[1px]">255</div>
          <div class="w-[11px] h-[15px] ml-[1px] bg-[#dfe3e8] border border-[#ccc] text-[#6a80a0] text-[5px] flex flex-col items-center justify-center gap-[1px]"><span>▲</span><span>▼</span></div>
          <div class="relative w-[137px] h-[18px] ml-[5px]">
            <i class="absolute left-[8px] right-[3px] top-[1px] h-[2px] bg-[repeating-linear-gradient(90deg,#bbb_0,#bbb_1px,transparent_1px,transparent_7px)]"></i>
            <i class="absolute left-0 right-0 top-[9px] h-[2px] bg-[#c8c8c8]"></i>
            <i class="absolute right-0 top-[3px] w-[8px] h-[14px] rounded-t-[4px] bg-gradient-to-b from-white to-[#d0d0d0] border border-[#999]"></i>
          </div>
        </div>
        <div class="h-[40px] flex items-start">
          <span class="w-[52px] pt-[3px] text-right pr-[1px]">明亮度 :</span>
          <div class="w-[30px] h-[15px] ml-[4px] border border-[#999] bg-white text-[8.500px] flex items-center pl-[1px]">255</div>
          <div class="w-[11px] h-[15px] ml-[1px] bg-[#dfe3e8] border border-[#ccc] text-[#6a80a0] text-[5px] flex flex-col items-center justify-center gap-[1px]"><span>▲</span><span>▼</span></div>
          <div class="relative w-[137px] h-[18px] ml-[5px]">
            <i class="absolute left-[8px] right-[3px] top-[1px] h-[2px] bg-[repeating-linear-gradient(90deg,#bbb_0,#bbb_1px,transparent_1px,transparent_7px)]"></i>
            <i class="absolute left-0 right-0 top-[9px] h-[2px] bg-[#c8c8c8]"></i>
            <i class="absolute right-0 top-[3px] w-[8px] h-[14px] rounded-t-[4px] bg-gradient-to-b from-white to-[#d0d0d0] border border-[#999]"></i>
          </div>
        </div>
        <div class="h-[40px] flex items-start">
          <span class="w-[52px] pt-[3px] text-right pr-[1px]">透明度 :</span>
          <div class="w-[30px] h-[15px] ml-[4px] border border-[#999] bg-white text-[8.500px] flex items-center pl-[1px]">255</div>
          <div class="w-[11px] h-[15px] ml-[1px] bg-[#dfe3e8] border border-[#ccc] text-[#6a80a0] text-[5px] flex flex-col items-center justify-center gap-[1px]"><span>▲</span><span>▼</span></div>
          <div class="relative w-[137px] h-[18px] ml-[5px]">
            <i class="absolute left-[8px] right-[3px] top-[1px] h-[2px] bg-[repeating-linear-gradient(90deg,#bbb_0,#bbb_1px,transparent_1px,transparent_7px)]"></i>
            <i class="absolute left-0 right-0 top-[9px] h-[2px] bg-[#c8c8c8]"></i>
            <i class="absolute right-0 top-[3px] w-[8px] h-[14px] rounded-t-[4px] bg-gradient-to-b from-white to-[#d0d0d0] border border-[#999]"></i>
          </div>
        </div>
      </div>
    </section>
    <div class="h-[15px] flex items-end pl-[9px] pb-[1px] border-b border-[#a9c9ec] font-['Liberation_Serif','Noto_Sans_CJK_SC',serif] font-bold text-[9px] text-[#222]">预定义颜色</div>
  </main>
  <div class="flex-1 bg-[#5f5f5f]"></div>
</div>

<!-- Tab bar -->
<div class="h-[22px] shrink-0 flex bg-[#666]">
  <i class="w-[18px] shrink-0"></i>
  <div class="w-[1054px] h-[17px] bg-[#a9a9a9] border-t border-[#d8d8d8] border-b flex items-center text-[#333] text-[8.700px] [&_svg]:w-[11px] [&_svg]:h-[11px] [&_svg]:shrink-0">
    <div class="w-[373px] flex items-center">
      <span class="ml-[9px] w-[10px] h-[10px] rounded-full bg-[radial-gradient(circle_at_35%_35%,#8fd0f0,#2a70a0_60%,#3d8040)]"></span>
      <span class="ml-[6px] w-[52px] whitespace-nowrap">空间图形编辑</span>
      <span class="ml-[9px] w-[18px] font-bold text-[#222] text-[10px]">×</span>
      <svg viewBox="0 0 11 11"><rect x=".5" y=".5" width="10" height="10" fill="#fff" stroke="#888"/><path d="M1 4h9M1 7h9M4 1v9M7 1v9" stroke="#c02020" stroke-width=".8"/></svg>
      <span class="ml-[5px] w-[44px] whitespace-nowrap">线图例编辑</span>
      <span class="ml-[8px] w-[16px] font-bold text-[#222] text-[10px]">×</span>
      <svg viewBox="0 0 11 11"><rect x="3" y="1" width="7" height="9" fill="#445" stroke="#334"/><rect x="4.500" y="2.500" width="4" height="3" fill="#cde"/><path d="M0 10l3-5 2 5z" fill="#2f8a30"/></svg>
      <span class="ml-[4px] w-[52px] whitespace-nowrap">属性结构编辑</span>
      <span class="ml-[9px] w-[18px] font-bold text-[#222] text-[10px]">×</span>
      <svg viewBox="0 0 11 11"><rect x="0" y="1" width="11" height="10" fill="#f0e08a"/><rect x="2" y="6" width="2" height="4" fill="#c02020"/><rect x="5" y="4" width="2" height="6" fill="#2a7a30"/><rect x="8" y="6" width="2" height="4" fill="#204090"/></svg>
      <span class="ml-[4px] w-[52px] whitespace-nowrap">柱状图形编辑</span>
      <span class="ml-[10px] font-bold text-[#222] text-[10px]">×</span>
    </div>
    <div class="h-[17px] -mt-[2px] w-[91px] bg-white flex items-center pl-[5px]">
      <svg><use href="#bar"/></svg>
      <span class="ml-[3px] w-[53px] whitespace-nowrap text-[#2c2ccc]">颜色图例编辑</span>
      <span class="ml-[9px] font-bold text-[#222] text-[10px]">×</span>
    </div>
  </div>
</div>

<!-- Status bar -->
<footer class="h-[14px] shrink-0 bg-[#a3a3a3] flex items-center whitespace-nowrap">
  <span class="ml-[3px] text-[#2c2ccc] w-[21px] text-[10px] leading-[14px]">颜色</span>
  <i class="ml-[8px] h-[11px] border-l border-[#666]"></i>
  <span class="ml-[7px] w-[57px] text-[#333]">初始颜色&gt;&gt;</span>
  <i class="w-[14px] h-[8px] mt-[6px] bg-[#ee0000] border border-[#444]"></i>
  <span class="ml-[2px] text-[#2c2ccc]">恢复旧颜色</span>
  <i class="ml-[387px] w-[3px] h-[5px] mt-[6px] bg-[#333]"></i>
</footer>

<!-- Floating colour legend panel -->
<aside class="absolute left-[912px] top-[54px] w-[164px] h-[590px] bg-[#e2e2e2] border-l border-b border-[#9a9a9a] pl-[3px] flex flex-col">
  <div class="h-[20px] bg-[#f3f3f3] -ml-[3px] pl-[4px] flex items-center justify-between font-bold text-[#444] text-[9px] pt-[2px]"><span>颜色图例</span><span class="text-[#777] font-normal -mr-[1px]">×</span></div>
  <div class="h-[18px] bg-gradient-to-b from-[#eeeeee] to-[#b4b4b4] flex items-center pl-[4px] gap-[4px] [&_svg]:w-[12px] [&_svg]:h-[12px]">
    <svg viewBox="0 0 12 12"><path d="M1 6l3-3 2 3-3 3z" fill="#e8b030"/><path d="M6 5l4-2 0 5-3 3z" fill="#40a0c0"/></svg>
    <svg viewBox="0 0 12 12"><path d="M1 6l4-3 3 4-4 4z" fill="#c050d0"/><path d="M9 1l2 4-3-1z" fill="#e8b030"/></svg>
    <i class="h-[14px] border-l border-[#888]"></i>
    <svg viewBox="0 0 12 12"><rect x="1" y="1" width="10" height="10" fill="#8cc0e0" stroke="#777"/><path d="M3 3h3v3H3z" fill="#e05050"/><path d="M7 6h3v3H7z" fill="#e8c030"/></svg>
    <svg viewBox="0 0 12 12"><path d="M1 4h4l1 1h5v6H1z" fill="#f0c840" stroke="#a08020" stroke-width=".6"/><path d="M8 1v4M6 3h4" stroke="#e8e060"/></svg>
  </div>

  <div class="flex-1 min-h-0 flex bg-white">
    <div class="flex-1 min-w-0 overflow-hidden">
      <div class="relative -mt-[6.700px] ml-[25px] text-[#444] [&_div]:h-[18.270px] [&_div]:flex [&_div]:items-center [&_div]:whitespace-nowrap [&_svg]:shrink-0 [&_i]:shrink-0">
        <i class="absolute left-0 top-[9px] h-[427px] border-l border-[#bbb]"></i>
        <div class="-ml-[1px] relative"><i class="w-[3px] h-[8px] bg-[#222]"></i><i class="w-[4px] h-[4px] bg-[#20b0c0]"></i><span class="ml-[8px] font-bold">新颜色库</span></div>
        <div><i class="w-[9px] border-t border-[#bbb]"></i><svg class="w-[12px] h-[12px]"><use href="#bar"/></svg><i class="ml-[7px] w-[15px] h-[10px] border border-[#555] bg-white"></i><span class="ml-[6px]">透明</span></div>
        <div class="-ml-[4px]"><svg class="w-[9px] h-[9px] relative"><use href="#plus"/></svg><i class="w-[4px]"></i><svg class="w-[12px] h-[10px]"><use href="#fc"/></svg><span class="ml-[5px]">通用</span></div>
        <div class="-ml-[4px]"><svg class="w-[9px] h-[9px] relative"><use href="#minus"/></svg><i class="w-[4px]"></i><svg class="w-[12px] h-[10px]"><use href="#fo"/></svg><span class="ml-[5px]">第四系</span></div>

        <section class="relative ml-[14px] [&>div]:h-[18.900px]!">
          <i class="absolute left-0 top-[-9px] bottom-[9px] border-l border-[#bbb]"></i>
          <div><i class="w-[9px] border-t border-[#bbb]"></i><svg class="w-[12px] h-[12px]"><use href="#bar"/></svg><i class="ml-[7px] w-[15px] h-[10px] border border-[#555] bg-[#ffd9f5]"></i><span class="ml-[6px]">&lt;Q₄ˢ&gt;填土层</span></div>
          <div><i class="w-[9px] border-t border-[#bbb]"></i><svg class="w-[12px] h-[12px]"><use href="#bar"/></svg><i class="ml-[7px] w-[15px] h-[10px] border border-[#555] bg-[#c8c8c8]"></i><span class="ml-[6px]">&lt;Q₄ᵐ&gt;海积层</span></div>
          <div><i class="w-[9px] border-t border-[#bbb]"></i><svg class="w-[12px] h-[12px]"><use href="#bar"/></svg><i class="ml-[7px] w-[15px] h-[10px] border border-[#555] bg-[#fbfbe2]"></i><span class="ml-[6px]">&lt;Q₄ᵐᶜ&gt;海陆交互层</span></div>
          <div><i class="w-[9px] border-t border-[#bbb]"></i><svg class="w-[12px] h-[12px]"><use href="#bar"/></svg><i class="ml-[7px] w-[15px] h-[10px] border border-[#555] bg-[#fbfbdc]"></i><span class="ml-[6px]">&lt;Q₄ᵈ&gt;坡积层</span></div>
          <div><i class="w-[9px] border-t border-[#bbb]"></i><svg class="w-[12px] h-[12px]"><use href="#bar"/></svg><i class="ml-[7px] w-[15px] h-[10px] border border-[#555] bg-[#f2e9a9]"></i><span class="ml-[6px]">&lt;Q₃ᵉ&gt;残积层</span></div>
          <div><i class="w-[9px] border-t border-[#bbb]"></i><svg class="w-[12px] h-[12px]"><use href="#bar"/></svg><i class="ml-[7px] w-[15px] h-[10px] border border-[#555] bg-[#dcf2b0]"></i><span class="ml-[6px]">&lt;Q₄ᵃ&gt;冲积层</span></div>
          <div><i class="w-[9px] border-t border-[#bbb]"></i><svg class="w-[12px] h-[12px]"><use href="#bar"/></svg><i class="ml-[7px] w-[15px] h-[10px] border border-[#555] bg-[#caff9e]"></i><span class="ml-[6px]">&lt;Q₄ᵖ&gt;洪积层</span></div>
          <div><i class="w-[9px] border-t border-[#bbb]"></i><svg class="w-[12px] h-[12px]"><use href="#bar"/></svg><i class="ml-[7px] w-[15px] h-[10px] border border-[#555] bg-[#b8f5dc]"></i><span class="ml-[6px]">&lt;Q₄ᵃᵖ&gt;冲洪积层</span></div>
        </section>

        <div class="-ml-[4px] mt-[1px]"><svg class="w-[9px] h-[9px] relative"><use href="#plus"/></svg><i class="w-[4px]"></i><svg class="w-[12px] h-[10px]"><use href="#fc"/></svg><span class="ml-[5px]">侵入体</span></div>
        <div class="-ml-[4px]"><svg class="w-[9px] h-[9px] relative"><use href="#minus"/></svg><i class="w-[4px]"></i><svg class="w-[12px] h-[10px]"><use href="#fo"/></svg><span class="ml-[5px] font-bold">红色</span></div>
        <section class="relative ml-[14px]">
          <i class="absolute left-0 top-[-9px] bottom-[9px] border-l border-[#bbb]"></i>
          <div><i class="w-[9px] border-t border-[#bbb]"></i><svg class="w-[12px] h-[12px]"><use href="#bar"/></svg><i class="ml-[7px] w-[15px] h-[10px] border border-[#555] bg-[#ffd4d4]"></i><span class="ml-[6px]">&lt;4&gt;新颜色</span></div>
          <div><i class="w-[9px] border-t border-[#bbb]"></i><svg class="w-[12px] h-[12px]"><use href="#bar"/></svg><i class="ml-[7px] w-[15px] h-[10px] border border-[#555] bg-[#ff0000]"></i><span class="ml-[6px]">&lt;3&gt;新颜色</span></div>
          <div><i class="w-[9px] border-t border-[#bbb]"></i><svg class="w-[12px] h-[12px]"><use href="#bar"/></svg><i class="ml-[7px] w-[15px] h-[10px] border border-[#555] bg-[#ff6a6a]"></i><span class="ml-[6px]">&lt;2&gt;新颜色</span></div>
          <div><i class="w-[9px] border-t border-[#bbb]"></i><svg class="w-[12px] h-[12px]"><use href="#bar"/></svg><i class="ml-[7px] w-[15px] h-[10px] border border-[#555] bg-[#ff0000]"></i><span class="ml-[3px] h-[17px] flex items-center px-[3px] bg-[#3b6cb8] border border-[#555] text-white font-bold">&lt;1&gt;新颜色</span></div>
        </section>
        <div class="-ml-[4px]"><svg class="w-[9px] h-[9px] relative"><use href="#minus"/></svg><i class="w-[4px]"></i><svg class="w-[12px] h-[10px]"><use href="#fo"/></svg><span class="ml-[5px]">绿色</span></div>
        <section class="relative ml-[14px]">
          <i class="absolute left-0 top-[-9px] bottom-[9px] border-l border-[#bbb]"></i>
          <div><i class="w-[9px] border-t border-[#bbb]"></i><svg class="w-[12px] h-[12px]"><use href="#bar"/></svg><i class="ml-[7px] w-[15px] h-[10px] border border-[#555] bg-[#ccffcc]"></i><span class="ml-[6px]">&lt;44&gt;新颜色</span></div>
          <div><i class="w-[9px] border-t border-[#bbb]"></i><svg class="w-[12px] h-[12px]"><use href="#bar"/></svg><i class="ml-[7px] w-[15px] h-[10px] border border-[#555] bg-[#aaffaa]"></i><span class="ml-[6px]">&lt;33&gt;新颜色</span></div>
          <div><i class="w-[9px] border-t border-[#bbb]"></i><svg class="w-[12px] h-[12px]"><use href="#bar"/></svg><i class="ml-[7px] w-[15px] h-[10px] border border-[#555] bg-[#66ff66]"></i><span class="ml-[6px]">&lt;22&gt;新颜色</span></div>
          <div><i class="w-[9px] border-t border-[#bbb]"></i><svg class="w-[12px] h-[12px]"><use href="#bar"/></svg><i class="ml-[7px] w-[15px] h-[10px] border border-[#555] bg-[#00ff00]"></i><span class="ml-[6px]">&lt;11&gt;新颜色</span></div>
        </section>
        <div class="-ml-[4px]"><svg class="w-[9px] h-[9px] relative"><use href="#minus"/></svg><i class="w-[4px]"></i><svg class="w-[12px] h-[10px]"><use href="#fo"/></svg><span class="ml-[5px]">蓝色</span></div>
        <section class="relative ml-[14px]">
          <i class="absolute left-0 top-[-9px] bottom-[9px] border-l border-[#bbb]"></i>
          <div><i class="w-[9px] border-t border-[#bbb]"></i><svg class="w-[12px] h-[12px]"><use href="#bar"/></svg><i class="ml-[7px] w-[15px] h-[10px] border border-[#555] bg-[#d9d9ff]"></i><span class="ml-[6px]">&lt;444&gt;新颜色</span></div>
          <div><i class="w-[9px] border-t border-[#bbb]"></i><svg class="w-[12px] h-[12px]"><use href="#bar"/></svg><i class="ml-[7px] w-[15px] h-[10px] border border-[#555] bg-[#aaaaff]"></i><span class="ml-[6px]">&lt;333&gt;新颜色</span></div>
          <div><i class="w-[9px] border-t border-[#bbb]"></i><svg class="w-[12px] h-[12px]"><use href="#bar"/></svg><i class="ml-[7px] w-[15px] h-[10px] border border-[#555] bg-[#6666ff]"></i><span class="ml-[6px]">&lt;222&gt;新颜色</span></div>
          <div><i class="w-[9px] border-t border-[#bbb]"></i><svg class="w-[12px] h-[12px]"><use href="#bar"/></svg><i class="ml-[7px] w-[15px] h-[10px] border border-[#555] bg-[#0000ff]"></i><span class="ml-[6px]">&lt;111&gt;新颜色</span></div>
        </section>
      </div>
    </div>
    <div class="w-[9px] flex flex-col border-l border-[#ccc] bg-[#f0f0f0] text-[5px] text-[#555] items-center shrink-0">
      <span class="h-[25px] pt-[5px]">▲</span>
      <i class="flex-1 w-full bg-[#d8d8d8] border-y border-[#bbb]"></i>
      <span class="h-[14px] pt-[4px]">▼</span>
    </div>
  </div>

  <div class="h-[15px] bg-[#efefef] flex items-center px-[4px] text-[6px] text-[#333]">
    <span class="w-[10px]">◀</span>
    <div class="w-[116px] h-[12px] bg-gradient-to-b from-[#f4f4f4] to-[#c8c8c8] border border-[#bbb] flex items-center justify-center">III</div>
    <span class="ml-[14px]">▶</span>
  </div>
  <div class="h-[19px] -ml-[3px] bg-[#6a6a6a] flex items-center pl-[4px] text-[#ddd] whitespace-nowrap [&_svg]:w-[11px] [&_svg]:h-[11px]">
    <div class="h-[16px] w-[51px] bg-[#f2f2f2] text-[#444] flex items-center pl-[2px] gap-[2px]">
      <svg viewBox="0 0 11 11"><rect x="0" y="0" width="3" height="3" fill="#e03030"/><rect x="4" y="0" width="3" height="3" fill="#30a030"/><rect x="8" y="0" width="3" height="3" fill="#3040d0"/><rect x="0" y="4" width="3" height="3" fill="#e8b030"/><rect x="4" y="4" width="3" height="3" fill="#c030a0"/><rect x="8" y="4" width="3" height="3" fill="#30a0d0"/><rect x="0" y="8" width="3" height="3" fill="#3040d0"/><rect x="4" y="8" width="3" height="3" fill="#e03030"/><rect x="8" y="8" width="3" height="3" fill="#30a030"/></svg>
      <span>颜色图例</span>
    </div>
    <svg class="ml-[5px]" viewBox="0 0 11 11"><rect x="0" y="1" width="6" height="6" fill="#40a0d0"/><rect x="5" y="5" width="6" height="6" fill="#e8c030"/></svg>
    <span class="ml-[3px]">标注样式</span>
    <svg class="ml-[8px]" viewBox="0 0 11 11"><path d="M0 10L6 0h2v10z" fill="#6060c0"/><path d="M5 8h6v2H5z" fill="#c060d0"/></svg>
    <span class="ml-[3px]">字体图例</span>
  </div>
</aside>

<!-- Callouts -->
<svg class="absolute left-0 top-0 w-[1076px] h-[722px] pointer-events-none" viewBox="0 0 1076 722">
  <path d="M490 64 H618 Q634 66 633 80 V96 Q634 110 618 110 H538 L410 136 L497 110 H490 Q470 108 470 96 V80 Q470 66 490 64 Z" fill="#fff" stroke="#222"/>
  <path d="M780 126 H880 Q903 128 903 150 V182 Q903 204 880 204 L940 225 L843 204 H780 Q758 204 758 182 V150 Q758 128 780 126 Z" fill="#fff" stroke="#222"/>
</svg>
<div class="absolute left-[493px] top-[75px] text-[21px] font-bold text-black tracking-[3px] whitespace-nowrap">编辑红颜色</div>
<div class="absolute left-[780px] top-[141px] text-[22px] font-bold text-black tracking-[5px] whitespace-nowrap">编辑颜色</div>
<div class="absolute left-[780px] top-[173px] text-[22px] font-bold text-black tracking-[2px] whitespace-nowrap">效果图例</div>

<!-- Watermark -->
<div class="absolute left-[945px] top-[682px] flex flex-col items-start whitespace-nowrap">
  <div class="flex items-end h-[21px]">
    <span class="text-[21px] tracking-[2px] text-[#2f78a8] font-bold [text-shadow:0_0_1px_#e8dc80]">地信网</span>
    <span class="text-[13px] italic font-bold text-[#d02818] tracking-[4px] pb-[1px] ml-[1px]">论坛</span>
  </div>
  <div class="mt-[1px] ml-[1px] font-['Liberation_Serif',serif] text-[16px] tracking-[2px] text-[#3f86b0] [text-shadow:0_0_1px_#e8dc80]">bbs.3s001.com</div>
</div>

</div>
</body>
</html>
